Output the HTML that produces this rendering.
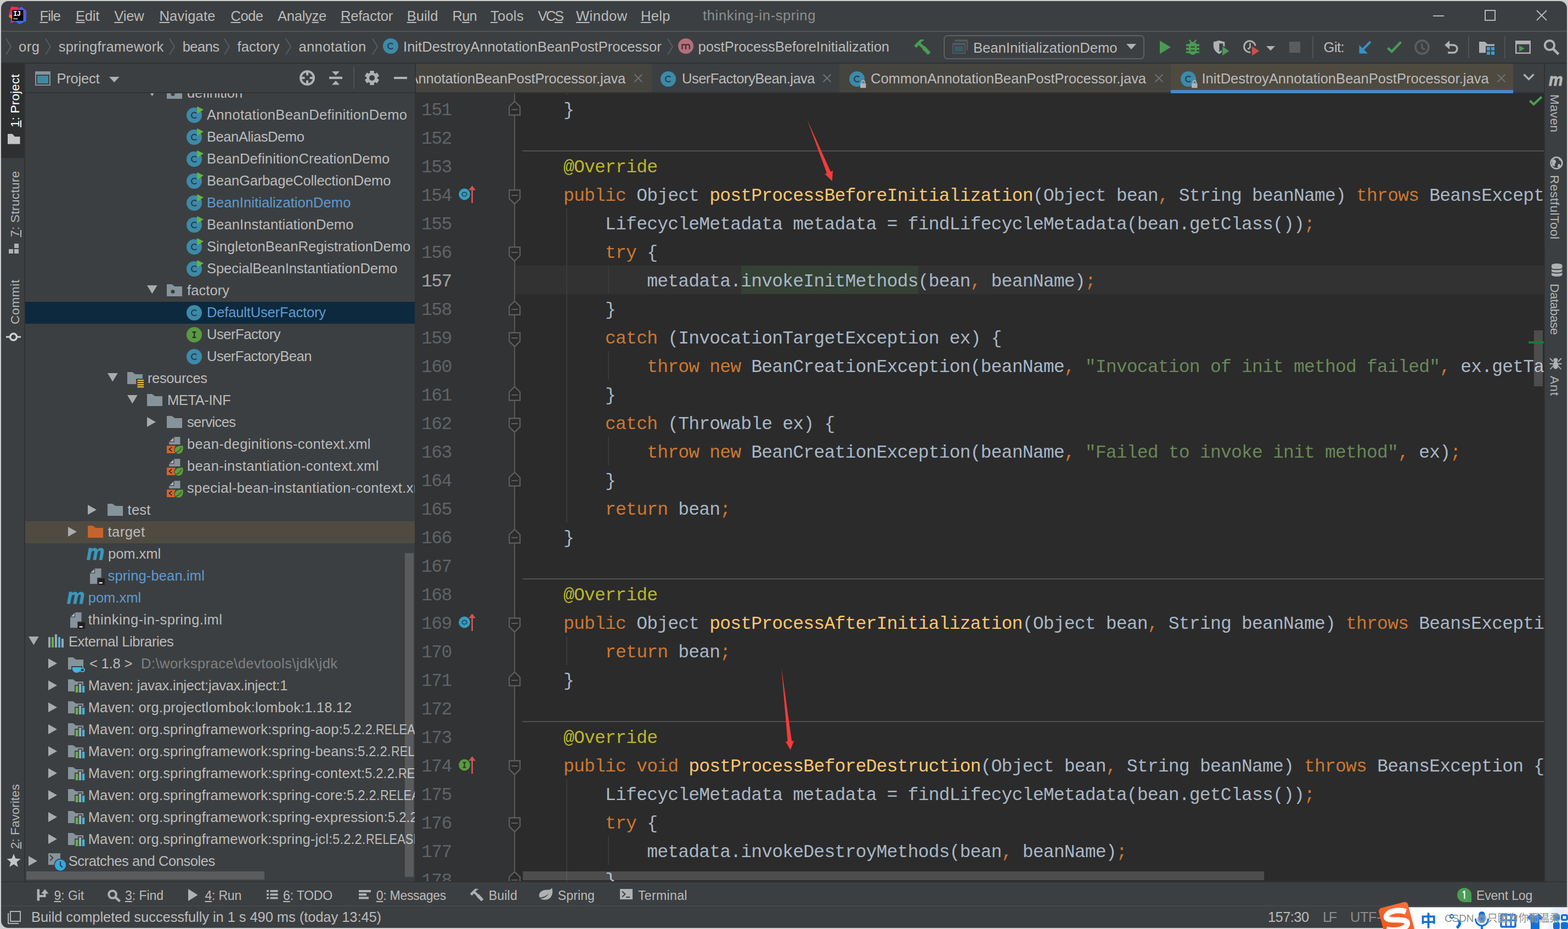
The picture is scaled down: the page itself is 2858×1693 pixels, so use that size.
<!DOCTYPE html><html><head><meta charset="utf-8"><title>thinking-in-spring</title>
<style>
html,body{margin:0;padding:0}
html{overflow:hidden}
body{width:2858px;height:1693px;overflow:hidden;background:#cdcdcd;position:relative;font-family:"Liberation Sans","Noto Sans CJK SC",sans-serif;font-size:25.5px;color:#bbbbbb}
#root{position:absolute;left:0;top:0;width:2858px;height:1693px;overflow:hidden}
#win{position:absolute;left:2px;top:2px;width:2854px;height:1689px;border-radius:13px;background:#3c3f41;overflow:hidden}
#pg{position:absolute;left:-2px;top:-2px;width:2858px;height:1693px}
u{text-decoration:underline;text-decoration-thickness:2px;text-underline-offset:2px}
.code{position:absolute;font-family:"Liberation Mono",monospace;font-size:33px;letter-spacing:-0.79px;white-space:pre;color:#a9b7c6;height:52px;line-height:60px;overflow:hidden}
.k{color:#cc7832}.a{color:#bbb529}.m{color:#ffc66d}.s{color:#6a8759}
.ln{color:#606366;font-size:33px;letter-spacing:-1.6px}
</style></head><body>
<div id="root"><div id="win"><div id="pg">
<div style="position:absolute;left:0px;top:56px;width:2858px;height:2px;background:#515354;"></div>
<svg style="position:absolute;left:16px;top:12px;" width="33" height="33" viewBox="0 0 33 33"><path d="M4.5 0L17 1L19 6L7 9L0.5 12.5Z" fill="#fe2857"/><path d="M22.5 0L32 7.5L31.5 26.5L19.5 32L12 27L14 9Z" fill="#3a6cf0"/><path d="M24 3L32 8L31 20L22 14Z" fill="#7a45d8" opacity="0.55"/><path d="M0.5 12.5L7 9L9 27L3 30.5L5 20L0 18Z" fill="#c530a8"/><path d="M0 18L3.5 14L8 16L7 24Z" fill="#fc801d"/><path d="M3 30.5L9 26L16 28L12 27Z" fill="#a735c5"/><rect x="6.3" y="6.2" width="20" height="19.6" fill="#000"/><rect x="8.4" y="21.6" width="8" height="1.4" fill="#fff"/><text x="8" y="17.3" font-family="Liberation Mono,monospace" font-weight="bold" font-size="12.5" fill="#fff" letter-spacing="-1">IJ</text></svg>
<div style="position:absolute;left:72.5px;top:14.16px;line-height:30px;font-size:25.5px;color:#bbbbbb;white-space:pre;letter-spacing:-0.897px;"><u>F</u>ile</div>
<div style="position:absolute;left:138px;top:14.16px;line-height:30px;font-size:25.5px;color:#bbbbbb;white-space:pre;letter-spacing:-0.235px;"><u>E</u>dit</div>
<div style="position:absolute;left:208.3px;top:14.16px;line-height:30px;font-size:25.5px;color:#bbbbbb;white-space:pre;letter-spacing:-0.152px;"><u>V</u>iew</div>
<div style="position:absolute;left:290.5px;top:14.16px;line-height:30px;font-size:25.5px;color:#bbbbbb;white-space:pre;letter-spacing:0.183px;"><u>N</u>avigate</div>
<div style="position:absolute;left:420.6px;top:14.16px;line-height:30px;font-size:25.5px;color:#bbbbbb;white-space:pre;letter-spacing:-0.564px;"><u>C</u>ode</div>
<div style="position:absolute;left:506px;top:14.16px;line-height:30px;font-size:25.5px;color:#bbbbbb;white-space:pre;letter-spacing:-0.245px;">Analy<u>z</u>e</div>
<div style="position:absolute;left:620.9px;top:14.16px;line-height:30px;font-size:25.5px;color:#bbbbbb;white-space:pre;letter-spacing:-0.158px;"><u>R</u>efactor</div>
<div style="position:absolute;left:741.8px;top:14.16px;line-height:30px;font-size:25.5px;color:#bbbbbb;white-space:pre;letter-spacing:-0.040px;"><u>B</u>uild</div>
<div style="position:absolute;left:824.6px;top:14.16px;line-height:30px;font-size:25.5px;color:#bbbbbb;white-space:pre;letter-spacing:-0.792px;">R<u>u</u>n</div>
<div style="position:absolute;left:894px;top:14.16px;line-height:30px;font-size:25.5px;color:#bbbbbb;white-space:pre;letter-spacing:0.235px;"><u>T</u>ools</div>
<div style="position:absolute;left:980.4px;top:14.16px;line-height:30px;font-size:25.5px;color:#bbbbbb;white-space:pre;letter-spacing:-2.445px;">VC<u>S</u></div>
<div style="position:absolute;left:1050px;top:14.16px;line-height:30px;font-size:25.5px;color:#bbbbbb;white-space:pre;letter-spacing:0.485px;"><u>W</u>indow</div>
<div style="position:absolute;left:1168px;top:14.16px;line-height:30px;font-size:25.5px;color:#bbbbbb;white-space:pre;letter-spacing:0.339px;"><u>H</u>elp</div>
<div style="position:absolute;left:1281px;top:13.16px;line-height:30px;font-size:25.5px;color:#8c8e90;white-space:pre;letter-spacing:0.658px;">thinking-in-spring</div>
<div style="position:absolute;left:2612px;top:28px;width:20px;height:2px;background:#b4b6b7;"></div>
<div style="position:absolute;left:2706px;top:18px;width:16px;height:16px;border:2px solid #b4b6b7"></div>
<svg style="position:absolute;left:2800px;top:18px;" width="20" height="20" viewBox="0 0 20 20"><path d="M1 1L19 19M19 1L1 19" stroke="#b4b6b7" stroke-width="2" fill="none"/></svg>
<div style="position:absolute;left:0px;top:114px;width:2858px;height:2px;background:#2f3133;"></div>
<svg style="position:absolute;left:10px;top:69px;" width="12" height="32" viewBox="0 0 12 32"><path d="M1 1.5L10 16L1 30.5" stroke="#5c6366" stroke-width="1.55" fill="none"/></svg>
<svg style="position:absolute;left:82px;top:69px;" width="12" height="32" viewBox="0 0 12 32"><path d="M1 1.5L10 16L1 30.5" stroke="#5c6366" stroke-width="1.55" fill="none"/></svg>
<svg style="position:absolute;left:308px;top:69px;" width="12" height="32" viewBox="0 0 12 32"><path d="M1 1.5L10 16L1 30.5" stroke="#5c6366" stroke-width="1.55" fill="none"/></svg>
<svg style="position:absolute;left:408px;top:69px;" width="12" height="32" viewBox="0 0 12 32"><path d="M1 1.5L10 16L1 30.5" stroke="#5c6366" stroke-width="1.55" fill="none"/></svg>
<svg style="position:absolute;left:520px;top:69px;" width="12" height="32" viewBox="0 0 12 32"><path d="M1 1.5L10 16L1 30.5" stroke="#5c6366" stroke-width="1.55" fill="none"/></svg>
<svg style="position:absolute;left:678px;top:69px;" width="12" height="32" viewBox="0 0 12 32"><path d="M1 1.5L10 16L1 30.5" stroke="#5c6366" stroke-width="1.55" fill="none"/></svg>
<svg style="position:absolute;left:1215.5px;top:69px;" width="12" height="32" viewBox="0 0 12 32"><path d="M1 1.5L10 16L1 30.5" stroke="#5c6366" stroke-width="1.55" fill="none"/></svg>
<div style="position:absolute;left:34px;top:70.16px;line-height:30px;font-size:25.5px;color:#bbbbbb;white-space:pre;letter-spacing:0.550px;">org</div>
<div style="position:absolute;left:106.7px;top:70.16px;line-height:30px;font-size:25.5px;color:#bbbbbb;white-space:pre;letter-spacing:0.216px;">springframework</div>
<div style="position:absolute;left:332.7px;top:70.16px;line-height:30px;font-size:25.5px;color:#bbbbbb;white-space:pre;letter-spacing:-0.534px;">beans</div>
<div style="position:absolute;left:432.5px;top:70.16px;line-height:30px;font-size:25.5px;color:#bbbbbb;white-space:pre;letter-spacing:0.083px;">factory</div>
<div style="position:absolute;left:544.4px;top:70.16px;line-height:30px;font-size:25.5px;color:#bbbbbb;white-space:pre;letter-spacing:0.420px;">annotation</div>
<svg style="position:absolute;left:697.7px;top:68px;" width="32" height="33" viewBox="0 -2 32 33"><circle cx="14" cy="14" r="14" fill="#3d8aa8"/><path d="M18.2 10.6A5.2 5.2 0 1 0 18.2 17.4" stroke="#214557" stroke-width="2.3" fill="none"/></svg>
<div style="position:absolute;left:735px;top:70.16px;line-height:30px;font-size:25.5px;color:#bbbbbb;white-space:pre;letter-spacing:0.043px;">InitDestroyAnnotationBeanPostProcessor</div>
<svg style="position:absolute;left:1235.5px;top:68px;" width="32" height="33" viewBox="0 -2 32 33"><circle cx="14" cy="14" r="14" fill="#b26f7c"/><path d="M7.4 19.7V10.3M7.4 13.4C8.6 10.2 13.8 10 14 13.6V19.7M14 13.6C15.2 10.2 20.6 10 20.8 13.6V19.7" stroke="#452930" stroke-width="2.15" fill="none"/></svg>
<div style="position:absolute;left:1272.5px;top:70.16px;line-height:30px;font-size:25.5px;color:#bbbbbb;white-space:pre;letter-spacing:-0.005px;">postProcessBeforeInitialization</div>
<svg style="position:absolute;left:1664px;top:70px;" width="34" height="34" viewBox="0 0 34 34"><g transform="scale(1.0)"><path d="M2 13.2L13.3 2H20.2V3.6L16.7 5.3L14 8.4L20.5 13.9L22.9 15.1L32.2 25.4L27.4 30L17.1 19.7V18.3L10.4 12.3L6.6 17.3Z" fill="#499c54"/></g></svg>
<div style="position:absolute;left:1720px;top:64px;width:362px;height:40px;border:2px solid #5e6162;border-radius:7px"></div>
<svg style="position:absolute;left:1735px;top:72px;" width="30" height="27" viewBox="0 0 30 27"><rect x="5" y="0.2" width="24" height="3.6" fill="#525a5f"/><rect x="26.8" y="0.2" width="2.2" height="19.6" fill="#525a5f"/><rect x="1" y="6.2" width="24" height="19.8" fill="#525a5f"/><rect x="3.1" y="10.2" width="19.8" height="13.7" fill="#3c3f41"/><rect x="5" y="12" width="16" height="10" fill="#3a5a66"/></svg>
<div style="position:absolute;left:1774px;top:72.16px;line-height:30px;font-size:25.5px;color:#bbbbbb;white-space:pre;letter-spacing:0.077px;">BeanInitializationDemo</div>
<svg style="position:absolute;left:2053px;top:80px;" width="18" height="10" viewBox="0 0 18 10"><path d="M0 0H18L9 10Z" fill="#afb1b3"/></svg>
<svg style="position:absolute;left:2114px;top:74px;" width="22" height="26" viewBox="0 0 22 26"><path d="M0 0L19.8 12.1L0 24.2Z" fill="#499c54"/></svg>
<svg style="position:absolute;left:2162px;top:72px;" width="25" height="30" viewBox="0 0 25 30"><path d="M5.7 0.8L9.6 5.6M18.3 0.8L14.4 5.6" stroke="#499c54" stroke-width="2.6" fill="none"/><path d="M12 4.4C7.6 4.4 5 7.6 5 11.4V20.6C5 25 8 27.9 12 27.9S19.2 25 19.2 20.6V11.4C19.2 7.6 16.4 4.4 12 4.4Z" fill="#499c54"/><rect x="0" y="8.3" width="24" height="3.9" fill="#499c54"/><rect x="0" y="15" width="24" height="3.8" fill="#499c54"/><rect x="0" y="21.6" width="24" height="3.2" fill="#499c54"/><rect x="8.3" y="12.5" width="7.5" height="2.2" fill="#3c3f41"/><rect x="8.3" y="19.1" width="7.5" height="2.2" fill="#3c3f41"/></svg>
<svg style="position:absolute;left:2211px;top:72px;" width="33" height="32" viewBox="0 0 33 32"><path d="M0.8 4.6L11 1.8L21.3 4.6V11C21.3 18 17.5 23 11 26.3C4.5 23 0.8 18 0.8 11Z" fill="#afb1b3"/><path d="M11.4 7.3L18.3 7.3V11C18.3 16 16 19.5 11.4 22.6Z" fill="#3c3f41"/><path d="M16.4 11.2L31 21L16.4 30.6Z" fill="#499c54" stroke="#3c3f41" stroke-width="1.6"/></svg>
<svg style="position:absolute;left:2265px;top:72px;" width="33" height="32" viewBox="0 0 33 32"><path d="M23.1 11.4A10.3 10.3 0 1 0 14.2 23.2" stroke="#afb1b3" stroke-width="3" fill="none"/><path d="M13.5 6.5V14.6L9.3 17.6" stroke="#afb1b3" stroke-width="2.6" fill="none"/><path d="M16.4 11.2L31.6 21L16.4 30.6Z" fill="#c9504c" stroke="#3c3f41" stroke-width="1.2"/></svg>
<svg style="position:absolute;left:2308px;top:84px;" width="16" height="9" viewBox="0 0 16 9"><path d="M0 0H16L8 8.2Z" fill="#afb1b3"/></svg>
<div style="position:absolute;left:2350px;top:76px;width:20px;height:20px;background:#5a5c5e;"></div>
<div style="position:absolute;left:2392px;top:66px;width:2px;height:40px;background:#515354;"></div>
<div style="position:absolute;left:2412.6px;top:71.16px;line-height:30px;font-size:25.5px;color:#bbbbbb;white-space:pre;letter-spacing:-0.542px;">Git:</div>
<svg style="position:absolute;left:2476px;top:74px;" width="25" height="25" viewBox="0 0 25 25"><path d="M22 2L5 19" stroke="#3592c4" stroke-width="4.2" fill="none"/><path d="M1.5 8V23.5H17Z" fill="#3592c4"/></svg>
<svg style="position:absolute;left:2527px;top:72px;" width="30" height="26" viewBox="0 0 30 26"><path d="M2.5 15.5L9.7 22L26.5 4.5" stroke="#499c54" stroke-width="4.4" fill="none"/></svg>
<svg style="position:absolute;left:2577px;top:71px;" width="30" height="30" viewBox="0 0 30 30"><circle cx="15" cy="15" r="12" stroke="#5a5d5f" stroke-width="3.8" fill="none"/><path d="M14.8 8V16L20 19.6" stroke="#5a5d5f" stroke-width="3.4" fill="none"/></svg>
<svg style="position:absolute;left:2630px;top:71px;" width="30" height="30" viewBox="0 0 30 30"><path d="M10 4L3 11L10 18" fill="none" stroke="#afb1b3" stroke-width="0"/><path d="M3 11L12 3V19Z" fill="#afb1b3"/><path d="M9 11H19a7 7 0 0 1 0 14H9" stroke="#afb1b3" stroke-width="3.4" fill="none"/></svg>
<div style="position:absolute;left:2676px;top:66px;width:2px;height:40px;background:#515354;"></div>
<svg style="position:absolute;left:2696px;top:76px;" width="30" height="26" viewBox="0 0 30 26"><path d="M0 0H10.5L15.5 4.6H28V20.2H0Z" fill="#afb1b3"/><rect x="12" y="7.8" width="18" height="18" fill="#3c3f41"/><rect x="14" y="9.8" width="6" height="6" fill="#3c9dd6"/><rect x="22" y="9.8" width="6" height="6" fill="#3c9dd6"/><rect x="14" y="17.8" width="6" height="6" fill="#3c9dd6"/><rect x="22" y="17.8" width="6" height="6" fill="#3c9dd6"/></svg>
<div style="position:absolute;left:2742px;top:66px;width:2px;height:40px;background:#515354;"></div>
<svg style="position:absolute;left:2762px;top:74px;" width="28" height="24" viewBox="0 0 28 24"><rect x="1.2" y="1.2" width="25.6" height="21.6" fill="none" stroke="#afb1b3" stroke-width="2.4"/><rect x="1" y="1" width="26" height="5.6" fill="#afb1b3"/><path d="M7 9L17 14.5L7 20Z" fill="#499c54"/></svg>
<svg style="position:absolute;left:2813px;top:71px;" width="32" height="32" viewBox="0 0 32 32"><circle cx="11.5" cy="11.5" r="8.6" stroke="#afb1b3" stroke-width="4" fill="none"/><path d="M18 18L27.8 27.8" stroke="#afb1b3" stroke-width="4.6"/></svg>
<div style="position:absolute;left:2px;top:116px;width:42px;height:172px;background:#2d2f30;"></div>
<div style="position:absolute;left:44px;top:116px;width:2px;height:1491px;background:#323232;"></div>
<div style="position:absolute;left:27px;top:232px;line-height:30px;font-size:22.7px;color:#ffffff;white-space:pre;letter-spacing:0.112px;transform-origin:0 0;transform:rotate(-90deg) translate(0,-15px)"><u>1</u>: Project</div>
<svg style="position:absolute;left:14px;top:244px;" width="24" height="19" viewBox="0 0 24 19"><path d="M0 0H8.5L13 5H22.5V18.5H0Z" fill="#c4c5c6"/></svg>
<div style="position:absolute;left:27px;top:432px;line-height:30px;font-size:22.7px;color:#b4b6b7;white-space:pre;letter-spacing:0.281px;transform-origin:0 0;transform:rotate(-90deg) translate(0,-15px)"><u>7</u>: Structure</div>
<svg style="position:absolute;left:16px;top:444px;" width="19" height="19" viewBox="0 0 19 19"><rect x="10" y="0" width="8" height="8" fill="#afb1b3"/><rect x="0" y="10" width="8" height="8" fill="#afb1b3"/><rect x="10" y="10" width="8" height="8" fill="#afb1b3"/></svg>
<div style="position:absolute;left:27px;top:591px;line-height:30px;font-size:22.7px;color:#b4b6b7;white-space:pre;letter-spacing:0.636px;transform-origin:0 0;transform:rotate(-90deg) translate(0,-15px)">Commit</div>
<svg style="position:absolute;left:11px;top:604px;" width="28" height="20" viewBox="0 0 28 20"><circle cx="13.5" cy="10" r="6" stroke="#d0d1d2" stroke-width="3.4" fill="none"/><path d="M0 10H7M20 10H27" stroke="#d0d1d2" stroke-width="3"/></svg>
<div style="position:absolute;left:27px;top:1547px;line-height:30px;font-size:22.7px;color:#b4b6b7;white-space:pre;letter-spacing:-0.048px;transform-origin:0 0;transform:rotate(-90deg) translate(0,-15px)"><u>2</u>: Favorites</div>
<svg style="position:absolute;left:12px;top:1556px;" width="26" height="25" viewBox="0 0 26 25"><path d="M13 0L16.4 8.6L25.6 9.2L18.5 15.1L20.8 24L13 19.1L5.2 24L7.5 15.1L0.4 9.2L9.6 8.6Z" fill="#c4c5c6"/></svg>
<div style="position:absolute;left:2814px;top:116px;width:2px;height:1491px;background:#323232;"></div>
<div style="position:absolute;left:2824px;top:139px;width:28px;height:19px;overflow:visible;font-family:'Liberation Sans',sans-serif;font-weight:bold;font-style:italic;font-size:32px;line-height:19px;color:#b4b6b7;-webkit-text-stroke:0.9px #b4b6b7;transform-origin:0 0;transform:scaleX(0.9)"><span style="position:relative;top:-3.5px;left:-1px">m</span></div>
<div style="position:absolute;left:2834px;top:172px;line-height:30px;font-size:22.7px;color:#b4b6b7;white-space:pre;letter-spacing:0.174px;transform-origin:0 0;transform:rotate(90deg) translate(0,-15px)">Maven</div>
<svg style="position:absolute;left:2825px;top:285px;" width="24" height="24" viewBox="0 0 24 24"><circle cx="12" cy="12" r="10.4" stroke="#afb1b3" stroke-width="2.6" fill="none"/><path d="M4 7C8 4 10 6 11 9C12 12 8 13 9 16C10 19 6 18 4 16Z M14 2.5C17 4 16 7 19 8C21 9 20 12 22 12C22 8 19 3 14 2.5Z M15 14C18 13 20 15 19 18C18 20 15 21 14 19Z" fill="#afb1b3"/></svg>
<div style="position:absolute;left:2834px;top:319px;line-height:30px;font-size:22.7px;color:#b4b6b7;white-space:pre;letter-spacing:0.492px;transform-origin:0 0;transform:rotate(90deg) translate(0,-15px)">RestfulTool</div>
<svg style="position:absolute;left:2825.5px;top:478.5px;" width="24" height="26" viewBox="0 0 24 26"><path d="M2 4.5C2 0 21.5 0 21.5 4.5V21.5C21.5 26 2 26 2 21.5Z" fill="#afb1b3"/><path d="M2 9.4C2 13.2 21.5 13.2 21.5 9.4M2 15.8C2 19.6 21.5 19.6 21.5 15.8" stroke="#3c3f41" stroke-width="2" fill="none"/></svg>
<div style="position:absolute;left:2834px;top:517px;line-height:30px;font-size:22.7px;color:#b4b6b7;white-space:pre;letter-spacing:-0.521px;transform-origin:0 0;transform:rotate(90deg) translate(0,-15px)">Database</div>
<svg style="position:absolute;left:2824px;top:650px;" width="23" height="24" viewBox="0 0 23 24"><ellipse cx="11.5" cy="6" rx="4" ry="3.6" fill="#afb1b3"/><ellipse cx="11.5" cy="15.5" rx="5" ry="7" fill="#afb1b3"/><path d="M7 9L1 3M16 9L22 3M6.5 13H0.5M16.5 13H22.5M7 17L1.5 23M16 17L21.5 23" stroke="#afb1b3" stroke-width="1.8" fill="none"/></svg>
<div style="position:absolute;left:2834px;top:685px;line-height:30px;font-size:22.7px;color:#b4b6b7;white-space:pre;letter-spacing:0.976px;transform-origin:0 0;transform:rotate(90deg) translate(0,-15px)">Ant</div>
<div style="position:absolute;left:0px;top:1606px;width:2858px;height:2px;background:#323232;"></div>
<div style="position:absolute;left:0px;top:1650px;width:2858px;height:2px;background:#454749;"></div>
<svg style="position:absolute;left:67px;top:1620px;" width="23" height="23" viewBox="0 0 23 23"><rect x="0.6" y="0.5" width="4.5" height="21" fill="#afb1b3"/><path d="M5 13H14.5V8" stroke="#afb1b3" stroke-width="4" fill="none"/><path d="M8 8.4L14.8 0.4L21.7 8.4Z" fill="#afb1b3"/></svg>
<div style="position:absolute;left:98.6px;top:1617.03px;line-height:30px;font-size:23px;color:#bbbbbb;white-space:pre;letter-spacing:-0.093px;"><u>9</u>: Git</div>
<svg style="position:absolute;left:195px;top:1620px;" width="26" height="26" viewBox="0 0 26 26"><circle cx="10" cy="10" r="6.8" stroke="#afb1b3" stroke-width="4" fill="none"/><path d="M15 15L23.6 22.6" stroke="#afb1b3" stroke-width="4.4"/></svg>
<div style="position:absolute;left:228px;top:1617.03px;line-height:30px;font-size:23px;color:#bbbbbb;white-space:pre;letter-spacing:-0.044px;"><u>3</u>: Find</div>
<svg style="position:absolute;left:343px;top:1620px;" width="18" height="22" viewBox="0 0 18 22"><path d="M0 0L17.5 11L0 22Z" fill="#afb1b3"/></svg>
<div style="position:absolute;left:373.5px;top:1617.03px;line-height:30px;font-size:23px;color:#bbbbbb;white-space:pre;letter-spacing:-0.210px;"><u>4</u>: Run</div>
<svg style="position:absolute;left:486px;top:1622px;" width="21" height="17" viewBox="0 0 21 17"><rect x="0" y="0" width="4" height="3.6" fill="#afb1b3"/><rect x="6.5" y="0" width="14" height="3.6" fill="#afb1b3"/><rect x="0" y="6.4" width="4" height="3.6" fill="#afb1b3"/><rect x="6.5" y="6.4" width="14" height="3.6" fill="#afb1b3"/><rect x="0" y="12.8" width="4" height="3.6" fill="#afb1b3"/><rect x="6.5" y="12.8" width="14" height="3.6" fill="#afb1b3"/></svg>
<div style="position:absolute;left:516px;top:1617.03px;line-height:30px;font-size:23px;color:#bbbbbb;white-space:pre;letter-spacing:-0.168px;"><u>6</u>: TODO</div>
<svg style="position:absolute;left:654px;top:1622px;" width="23" height="18" viewBox="0 0 23 18"><rect x="0" y="0" width="22" height="4" fill="#afb1b3"/><rect x="0" y="6.2" width="14" height="4" fill="#afb1b3"/><rect x="0" y="12.4" width="18" height="4" fill="#afb1b3"/></svg>
<div style="position:absolute;left:685.8px;top:1617.03px;line-height:30px;font-size:23px;color:#bbbbbb;white-space:pre;letter-spacing:-0.290px;"><u>0</u>: Messages</div>
<svg style="position:absolute;left:854.5px;top:1617.5px;" width="34" height="34" viewBox="0 0 34 34"><g transform="scale(0.82)"><path d="M2 13.2L13.3 2H20.2V3.6L16.7 5.3L14 8.4L20.5 13.9L22.9 15.1L32.2 25.4L27.4 30L17.1 19.7V18.3L10.4 12.3L6.6 17.3Z" fill="#afb1b3"/></g></svg>
<div style="position:absolute;left:890.7px;top:1617.03px;line-height:30px;font-size:23px;color:#bbbbbb;white-space:pre;letter-spacing:0.231px;">Build</div>
<svg style="position:absolute;left:982px;top:1618px;" width="26" height="24" viewBox="0 0 26 24"><path d="M0.5 14C1 6 9 3 17 3.6C20 3.8 22.5 2.5 24 0C26 6 25.5 13 21 18C16 23 7 22.5 3 19.5C8 19.5 15 16.5 18.5 10C14 15 7 17.5 1.5 17.5Z" fill="#afb1b3"/></svg>
<div style="position:absolute;left:1016.8px;top:1617.03px;line-height:30px;font-size:23px;color:#bbbbbb;white-space:pre;letter-spacing:0.120px;">Spring</div>
<svg style="position:absolute;left:1130px;top:1620px;" width="23" height="19" viewBox="0 0 23 19"><rect x="0" y="0" width="23" height="19" fill="#afb1b3"/><path d="M4 4.5L9.5 9.5L4 14.5" stroke="#3c3f41" stroke-width="2" fill="none"/><path d="M11 15H18" stroke="#3c3f41" stroke-width="2"/></svg>
<div style="position:absolute;left:1163px;top:1617.03px;line-height:30px;font-size:23px;color:#bbbbbb;white-space:pre;letter-spacing:0.362px;">Terminal</div>
<div style="position:absolute;left:2656px;top:1618px;width:26px;height:26px;border-radius:13px 13px 0 13px;background:#499c54"></div>
<div style="position:absolute;left:2663.3px;top:1616.59px;line-height:30px;font-size:18.5px;color:#ffffff;white-space:pre;font-weight:bold;font-family:NanumGothic,sans-serif;">1</div>
<div style="position:absolute;left:2691px;top:1617.03px;line-height:30px;font-size:23px;color:#bbbbbb;white-space:pre;letter-spacing:-0.175px;">Event Log</div>
<div style="position:absolute;left:18px;top:1660px;width:16px;height:16px;border:2px solid #b0b2b4"></div>
<svg style="position:absolute;left:13px;top:1664px;" width="24" height="22" viewBox="0 0 24 22"><path d="M2 0V19H21" stroke="#b0b2b4" stroke-width="2" fill="none"/></svg>
<div style="position:absolute;left:57px;top:1656.16px;line-height:30px;font-size:25.5px;color:#bbbbbb;white-space:pre;letter-spacing:-0.072px;">Build completed successfully in 1 s 490 ms (today 13:45)</div>
<div style="position:absolute;left:2311px;top:1656.16px;line-height:30px;font-size:25.5px;color:#bbbbbb;white-space:pre;letter-spacing:-0.581px;">157:30</div>
<div style="position:absolute;left:2411px;top:1656.16px;line-height:30px;font-size:25.5px;color:#8a8c8e;white-space:pre;letter-spacing:-3.378px;">LF</div>
<div style="position:absolute;left:2461px;top:1656.16px;line-height:30px;font-size:25.5px;color:#8a8c8e;white-space:pre;letter-spacing:-0.447px;">UTF-8</div>
<div style="position:absolute;left:46px;top:170px;width:710px;height:1436px;overflow:hidden;background:#3c3f41">
<div style="position:absolute;left:-46px;top:-170px;width:2858px;height:1693px">
<svg style="position:absolute;left:268px;top:160px;" width="19" height="16" viewBox="0 0 19 16"><path d="M0 0H18.6L9.3 15.5Z" fill="#a9abad"/></svg>
<svg style="position:absolute;left:304px;top:158px;" width="32" height="30" viewBox="0 0 32 30"><path d="M0 0H9L14.5 4H28V22H0Z" fill="#87939a"/><circle cx="11" cy="13.5" r="3.6" fill="#3c3f41"/></svg>
<div style="position:absolute;left:341px;top:154.16px;line-height:30px;font-size:25.5px;color:#bbbbbb;white-space:pre;letter-spacing:-0.107px;">definition</div>
<svg style="position:absolute;left:340px;top:194px;" width="32" height="33" viewBox="0 -2 32 33"><circle cx="14" cy="14" r="14" fill="#3d8aa8"/><path d="M18.2 10.6A5.2 5.2 0 1 0 18.2 17.4" stroke="#214557" stroke-width="2.3" fill="none"/><path d="M19 -2.2L31 3.8L19.4 11.6Z" fill="#62b543" stroke="#3c3f41" stroke-width="0"/></svg>
<div style="position:absolute;left:377px;top:194.16px;line-height:30px;font-size:25.5px;color:#bbbbbb;white-space:pre;letter-spacing:0.336px;">AnnotationBeanDefinitionDemo</div>
<svg style="position:absolute;left:340px;top:234px;" width="32" height="33" viewBox="0 -2 32 33"><circle cx="14" cy="14" r="14" fill="#3d8aa8"/><path d="M18.2 10.6A5.2 5.2 0 1 0 18.2 17.4" stroke="#214557" stroke-width="2.3" fill="none"/><path d="M19 -2.2L31 3.8L19.4 11.6Z" fill="#62b543" stroke="#3c3f41" stroke-width="0"/></svg>
<div style="position:absolute;left:377px;top:234.16px;line-height:30px;font-size:25.5px;color:#bbbbbb;white-space:pre;letter-spacing:-0.418px;">BeanAliasDemo</div>
<svg style="position:absolute;left:340px;top:274px;" width="32" height="33" viewBox="0 -2 32 33"><circle cx="14" cy="14" r="14" fill="#3d8aa8"/><path d="M18.2 10.6A5.2 5.2 0 1 0 18.2 17.4" stroke="#214557" stroke-width="2.3" fill="none"/><path d="M19 -2.2L31 3.8L19.4 11.6Z" fill="#62b543" stroke="#3c3f41" stroke-width="0"/></svg>
<div style="position:absolute;left:377px;top:274.16px;line-height:30px;font-size:25.5px;color:#bbbbbb;white-space:pre;letter-spacing:0.117px;">BeanDefinitionCreationDemo</div>
<svg style="position:absolute;left:340px;top:314px;" width="32" height="33" viewBox="0 -2 32 33"><circle cx="14" cy="14" r="14" fill="#3d8aa8"/><path d="M18.2 10.6A5.2 5.2 0 1 0 18.2 17.4" stroke="#214557" stroke-width="2.3" fill="none"/><path d="M19 -2.2L31 3.8L19.4 11.6Z" fill="#62b543" stroke="#3c3f41" stroke-width="0"/></svg>
<div style="position:absolute;left:377px;top:314.16px;line-height:30px;font-size:25.5px;color:#bbbbbb;white-space:pre;letter-spacing:-0.143px;">BeanGarbageCollectionDemo</div>
<svg style="position:absolute;left:340px;top:354px;" width="32" height="33" viewBox="0 -2 32 33"><circle cx="14" cy="14" r="14" fill="#3d8aa8"/><path d="M18.2 10.6A5.2 5.2 0 1 0 18.2 17.4" stroke="#214557" stroke-width="2.3" fill="none"/><path d="M19 -2.2L31 3.8L19.4 11.6Z" fill="#62b543" stroke="#3c3f41" stroke-width="0"/></svg>
<div style="position:absolute;left:377px;top:354.16px;line-height:30px;font-size:25.5px;color:#5e9bd1;white-space:pre;letter-spacing:0.073px;">BeanInitializationDemo</div>
<svg style="position:absolute;left:340px;top:394px;" width="32" height="33" viewBox="0 -2 32 33"><circle cx="14" cy="14" r="14" fill="#3d8aa8"/><path d="M18.2 10.6A5.2 5.2 0 1 0 18.2 17.4" stroke="#214557" stroke-width="2.3" fill="none"/><path d="M19 -2.2L31 3.8L19.4 11.6Z" fill="#62b543" stroke="#3c3f41" stroke-width="0"/></svg>
<div style="position:absolute;left:377px;top:394.16px;line-height:30px;font-size:25.5px;color:#bbbbbb;white-space:pre;letter-spacing:0.116px;">BeanInstantiationDemo</div>
<svg style="position:absolute;left:340px;top:434px;" width="32" height="33" viewBox="0 -2 32 33"><circle cx="14" cy="14" r="14" fill="#3d8aa8"/><path d="M18.2 10.6A5.2 5.2 0 1 0 18.2 17.4" stroke="#214557" stroke-width="2.3" fill="none"/><path d="M19 -2.2L31 3.8L19.4 11.6Z" fill="#62b543" stroke="#3c3f41" stroke-width="0"/></svg>
<div style="position:absolute;left:377px;top:434.16px;line-height:30px;font-size:25.5px;color:#bbbbbb;white-space:pre;letter-spacing:0.043px;">SingletonBeanRegistrationDemo</div>
<svg style="position:absolute;left:340px;top:474px;" width="32" height="33" viewBox="0 -2 32 33"><circle cx="14" cy="14" r="14" fill="#3d8aa8"/><path d="M18.2 10.6A5.2 5.2 0 1 0 18.2 17.4" stroke="#214557" stroke-width="2.3" fill="none"/><path d="M19 -2.2L31 3.8L19.4 11.6Z" fill="#62b543" stroke="#3c3f41" stroke-width="0"/></svg>
<div style="position:absolute;left:377px;top:474.16px;line-height:30px;font-size:25.5px;color:#bbbbbb;white-space:pre;letter-spacing:-0.050px;">SpecialBeanInstantiationDemo</div>
<svg style="position:absolute;left:268px;top:520px;" width="19" height="16" viewBox="0 0 19 16"><path d="M0 0H18.6L9.3 15.5Z" fill="#a9abad"/></svg>
<svg style="position:absolute;left:304px;top:518px;" width="32" height="30" viewBox="0 0 32 30"><path d="M0 0H9L14.5 4H28V22H0Z" fill="#87939a"/><circle cx="11" cy="13.5" r="3.6" fill="#3c3f41"/></svg>
<div style="position:absolute;left:341px;top:514.16px;line-height:30px;font-size:25.5px;color:#bbbbbb;white-space:pre;letter-spacing:0.069px;">factory</div>
<div style="position:absolute;left:46px;top:550px;width:710px;height:40px;background:#0d293e;"></div>
<svg style="position:absolute;left:340px;top:554px;" width="32" height="33" viewBox="0 -2 32 33"><circle cx="14" cy="14" r="14" fill="#3d8aa8"/><path d="M18.2 10.6A5.2 5.2 0 1 0 18.2 17.4" stroke="#214557" stroke-width="2.3" fill="none"/></svg>
<div style="position:absolute;left:377px;top:554.16px;line-height:30px;font-size:25.5px;color:#5e9bd1;white-space:pre;letter-spacing:-0.152px;">DefaultUserFactory</div>
<svg style="position:absolute;left:340px;top:594px;" width="32" height="33" viewBox="0 -2 32 33"><circle cx="14" cy="14" r="14" fill="#5a9a42"/><path d="M10.5 9.2H17.5M10.5 18.8H17.5M14 9.2V18.8" stroke="#253320" stroke-width="2.2" fill="none"/></svg>
<div style="position:absolute;left:377px;top:594.16px;line-height:30px;font-size:25.5px;color:#bbbbbb;white-space:pre;letter-spacing:-0.441px;">UserFactory</div>
<svg style="position:absolute;left:340px;top:634px;" width="32" height="33" viewBox="0 -2 32 33"><circle cx="14" cy="14" r="14" fill="#3d8aa8"/><path d="M18.2 10.6A5.2 5.2 0 1 0 18.2 17.4" stroke="#214557" stroke-width="2.3" fill="none"/></svg>
<div style="position:absolute;left:377px;top:634.16px;line-height:30px;font-size:25.5px;color:#bbbbbb;white-space:pre;letter-spacing:-0.507px;">UserFactoryBean</div>
<svg style="position:absolute;left:196px;top:680px;" width="19" height="16" viewBox="0 0 19 16"><path d="M0 0H18.6L9.3 15.5Z" fill="#a9abad"/></svg>
<svg style="position:absolute;left:232px;top:678px;" width="32" height="30" viewBox="0 0 32 30"><path d="M0 0H9L14.5 4H28V22H0Z" fill="#87939a"/><rect x="16" y="12" width="16" height="18" fill="#3c3f41"/><path d="M18.5 15.2H30M18.5 19.2H30M18.5 23.1H30M18.5 27H30" stroke="#eab63a" stroke-width="2.3"/></svg>
<div style="position:absolute;left:269px;top:674.16px;line-height:30px;font-size:25.5px;color:#bbbbbb;white-space:pre;letter-spacing:-0.373px;">resources</div>
<svg style="position:absolute;left:232px;top:720px;" width="19" height="16" viewBox="0 0 19 16"><path d="M0 0H18.6L9.3 15.5Z" fill="#a9abad"/></svg>
<svg style="position:absolute;left:268px;top:718px;" width="32" height="30" viewBox="0 0 32 30"><path d="M0 0H9L14.5 4H28V22H0Z" fill="#87939a"/></svg>
<div style="position:absolute;left:305px;top:714.16px;line-height:30px;font-size:25.5px;color:#bbbbbb;white-space:pre;letter-spacing:-0.401px;">META-INF</div>
<svg style="position:absolute;left:268px;top:760px;" width="17" height="19" viewBox="0 0 17 19"><path d="M0 0L16 9L0 18Z" fill="#a9abad"/></svg>
<svg style="position:absolute;left:304px;top:758px;" width="32" height="30" viewBox="0 0 32 30"><path d="M0 0H9L14.5 4H28V22H0Z" fill="#87939a"/></svg>
<div style="position:absolute;left:341px;top:754.16px;line-height:30px;font-size:25.5px;color:#bbbbbb;white-space:pre;letter-spacing:-0.652px;">services</div>
<svg style="position:absolute;left:304px;top:796px;" width="34" height="32" viewBox="0 0 34 32"><path d="M4.2 9.5L13.5 0.3H24.4V14H4.2Z" fill="#87939a"/><path d="M4.2 9.5H13.5V0.3Z" fill="#3c3f41"/><path d="M5.6 8.2L12.2 1.7V8.2Z" fill="#aeb9c0"/><rect x="0" y="16.3" width="16" height="13.7" fill="#d4632a"/><path d="M9.2 19L4.3 22.8L9.2 26.6" stroke="#2b1a10" stroke-width="1.5" fill="none"/><circle cx="22" cy="23.4" r="8.6" fill="#3c3f41"/><path d="M14.6 26C13.6 19 19 15.6 29.3 16.2C31 23 28.5 30.6 21 30.8C18.5 30.8 16.4 29.6 15.4 27.8Z" fill="#5b9e3d"/><path d="M15.2 29.4C20 27.8 24.5 24.5 26.6 19.6" stroke="#2c4a1e" stroke-width="1.2" fill="none"/></svg>
<div style="position:absolute;left:341px;top:794.16px;line-height:30px;font-size:25.5px;color:#bbbbbb;white-space:pre;letter-spacing:0.365px;">bean-deginitions-context.xml</div>
<svg style="position:absolute;left:304px;top:836px;" width="34" height="32" viewBox="0 0 34 32"><path d="M4.2 9.5L13.5 0.3H24.4V14H4.2Z" fill="#87939a"/><path d="M4.2 9.5H13.5V0.3Z" fill="#3c3f41"/><path d="M5.6 8.2L12.2 1.7V8.2Z" fill="#aeb9c0"/><rect x="0" y="16.3" width="16" height="13.7" fill="#d4632a"/><path d="M9.2 19L4.3 22.8L9.2 26.6" stroke="#2b1a10" stroke-width="1.5" fill="none"/><circle cx="22" cy="23.4" r="8.6" fill="#3c3f41"/><path d="M14.6 26C13.6 19 19 15.6 29.3 16.2C31 23 28.5 30.6 21 30.8C18.5 30.8 16.4 29.6 15.4 27.8Z" fill="#5b9e3d"/><path d="M15.2 29.4C20 27.8 24.5 24.5 26.6 19.6" stroke="#2c4a1e" stroke-width="1.2" fill="none"/></svg>
<div style="position:absolute;left:341px;top:834.16px;line-height:30px;font-size:25.5px;color:#bbbbbb;white-space:pre;letter-spacing:0.365px;">bean-instantiation-context.xml</div>
<svg style="position:absolute;left:304px;top:876px;" width="34" height="32" viewBox="0 0 34 32"><path d="M4.2 9.5L13.5 0.3H24.4V14H4.2Z" fill="#87939a"/><path d="M4.2 9.5H13.5V0.3Z" fill="#3c3f41"/><path d="M5.6 8.2L12.2 1.7V8.2Z" fill="#aeb9c0"/><rect x="0" y="16.3" width="16" height="13.7" fill="#d4632a"/><path d="M9.2 19L4.3 22.8L9.2 26.6" stroke="#2b1a10" stroke-width="1.5" fill="none"/><circle cx="22" cy="23.4" r="8.6" fill="#3c3f41"/><path d="M14.6 26C13.6 19 19 15.6 29.3 16.2C31 23 28.5 30.6 21 30.8C18.5 30.8 16.4 29.6 15.4 27.8Z" fill="#5b9e3d"/><path d="M15.2 29.4C20 27.8 24.5 24.5 26.6 19.6" stroke="#2c4a1e" stroke-width="1.2" fill="none"/></svg>
<div style="position:absolute;left:341px;top:874.16px;line-height:30px;font-size:25.5px;color:#bbbbbb;white-space:pre;letter-spacing:0.365px;">special-bean-instantiation-context.xml</div>
<svg style="position:absolute;left:160px;top:920px;" width="17" height="19" viewBox="0 0 17 19"><path d="M0 0L16 9L0 18Z" fill="#a9abad"/></svg>
<svg style="position:absolute;left:196px;top:918px;" width="32" height="30" viewBox="0 0 32 30"><path d="M0 0H9L14.5 4H28V22H0Z" fill="#87939a"/></svg>
<div style="position:absolute;left:232.6px;top:914.16px;line-height:30px;font-size:25.5px;color:#bbbbbb;white-space:pre;letter-spacing:0.200px;">test</div>
<div style="position:absolute;left:46px;top:950px;width:710px;height:40px;background:#4f4b41;"></div>
<svg style="position:absolute;left:124px;top:960px;" width="17" height="19" viewBox="0 0 17 19"><path d="M0 0L16 9L0 18Z" fill="#a9abad"/></svg>
<svg style="position:absolute;left:160px;top:958px;" width="32" height="30" viewBox="0 0 32 30"><path d="M0 0H9L14.5 4H28V22H0Z" fill="#c4642c"/></svg>
<div style="position:absolute;left:196.5px;top:954.16px;line-height:30px;font-size:25.5px;color:#bbbbbb;white-space:pre;letter-spacing:0.467px;">target</div>
<div style="position:absolute;left:159px;top:1000.5px;width:34px;height:23px;overflow:visible;font-family:'Liberation Sans',sans-serif;font-weight:bold;font-style:italic;font-size:38px;line-height:23px;color:#3a98ba;-webkit-text-stroke:0.9px #3a98ba;transform-origin:0 0;transform:scaleX(0.96)"><span style="position:relative;top:-4.2px;left:-1px">m</span></div>
<div style="position:absolute;left:197px;top:994.16px;line-height:30px;font-size:25.5px;color:#bbbbbb;white-space:pre;letter-spacing:-0.035px;">pom.xml</div>
<svg style="position:absolute;left:163.5px;top:1036px;" width="30" height="32" viewBox="0 0 30 32"><path d="M0 9L9 0H20.5V28H0Z" fill="#87939a"/><path d="M0 9H9V0Z" fill="#3c3f41"/><path d="M1.3 7.8L7.8 1.3V7.8Z" fill="#aeb9c0"/><rect x="13" y="16.6" width="15.6" height="14.6" fill="#3c3f41"/><rect x="14.6" y="18.2" width="12.4" height="11.8" fill="#231f20"/><rect x="16.6" y="25.2" width="6" height="2.2" fill="#fff"/></svg>
<div style="position:absolute;left:196.5px;top:1034.16px;line-height:30px;font-size:25.5px;color:#5e9bd1;white-space:pre;letter-spacing:0.146px;">spring-bean.iml</div>
<div style="position:absolute;left:123px;top:1080.5px;width:34px;height:23px;overflow:visible;font-family:'Liberation Sans',sans-serif;font-weight:bold;font-style:italic;font-size:38px;line-height:23px;color:#3a98ba;-webkit-text-stroke:0.9px #3a98ba;transform-origin:0 0;transform:scaleX(0.96)"><span style="position:relative;top:-4.2px;left:-1px">m</span></div>
<div style="position:absolute;left:160.7px;top:1074.16px;line-height:30px;font-size:25.5px;color:#5e9bd1;white-space:pre;letter-spacing:0.008px;">pom.xml</div>
<svg style="position:absolute;left:127.5px;top:1116px;" width="30" height="32" viewBox="0 0 30 32"><path d="M0 9L9 0H20.5V28H0Z" fill="#87939a"/><path d="M0 9H9V0Z" fill="#3c3f41"/><path d="M1.3 7.8L7.8 1.3V7.8Z" fill="#aeb9c0"/><rect x="13" y="16.6" width="15.6" height="14.6" fill="#3c3f41"/><rect x="14.6" y="18.2" width="12.4" height="11.8" fill="#231f20"/><rect x="16.6" y="25.2" width="6" height="2.2" fill="#fff"/></svg>
<div style="position:absolute;left:160.7px;top:1114.16px;line-height:30px;font-size:25.5px;color:#bbbbbb;white-space:pre;letter-spacing:0.499px;">thinking-in-spring.iml</div>
<svg style="position:absolute;left:52px;top:1160px;" width="19" height="16" viewBox="0 0 19 16"><path d="M0 0H18.6L9.3 15.5Z" fill="#a9abad"/></svg>
<svg style="position:absolute;left:88px;top:1156px;" width="28" height="24" viewBox="0 0 28 24"><rect x="0" y="5" width="4" height="19" fill="#9aa7b0"/><rect x="6" y="5" width="4" height="19" fill="#62b543"/><rect x="12" y="0" width="4" height="24" fill="#9aa7b0"/><rect x="18" y="5" width="4" height="19" fill="#40b6e0"/><rect x="24" y="8" width="4" height="16" fill="#9aa7b0"/></svg>
<div style="position:absolute;left:125px;top:1154.16px;line-height:30px;font-size:25.5px;color:#bbbbbb;white-space:pre;letter-spacing:-0.389px;">External Libraries</div>
<svg style="position:absolute;left:88px;top:1200px;" width="17" height="19" viewBox="0 0 17 19"><path d="M0 0L16 9L0 18Z" fill="#a9abad"/></svg>
<svg style="position:absolute;left:124px;top:1198px;" width="32" height="30" viewBox="0 0 32 30"><path d="M0 0H9L14.5 4H28V22H0Z" fill="#87939a"/><rect x="6" y="16" width="20" height="8" fill="#3c3f41"/><path d="M7.7 17.9H24V19.5C24 25 20 28 15.85 28S7.7 25 7.7 19.5Z" fill="#40b6e0"/><rect x="22" y="20.2" width="8" height="5.6" rx="2.8" fill="#3c3f41" stroke="#40b6e0" stroke-width="1.8"/><path d="M9 17.9H24V19.5C24 21 23.7 22 23.4 23H21Z" fill="#40b6e0"/></svg>
<div style="position:absolute;left:162.9px;top:1194.16px;line-height:30px;font-size:25.5px;color:#bbbbbb;white-space:pre;letter-spacing:-0.157px;">&lt; 1.8 &gt;</div>
<div style="position:absolute;left:257px;top:1194.16px;line-height:30px;font-size:25.5px;color:#7f8183;white-space:pre;letter-spacing:0.471px;">D:\worksprace\devtools\jdk\jdk</div>
<svg style="position:absolute;left:88px;top:1240px;" width="17" height="19" viewBox="0 0 17 19"><path d="M0 0L16 9L0 18Z" fill="#a9abad"/></svg>
<svg style="position:absolute;left:124px;top:1238px;" width="32" height="30" viewBox="0 0 32 30"><path d="M0 0H9L14.5 4H28V22H0Z" fill="#87939a"/><path d="M12 25V10H18.2V6.3H25.8V10H32V25Z" fill="#3c3f41"/><rect x="13.7" y="11.8" width="4.6" height="12.2" fill="#62b543"/><rect x="19.9" y="8" width="4.2" height="16" fill="#9aa7b0"/><rect x="25.8" y="11.8" width="4.4" height="12.2" fill="#40b6e0"/></svg>
<div style="position:absolute;left:160.7px;top:1234.16px;line-height:30px;font-size:25.5px;color:#bbbbbb;white-space:pre;letter-spacing:-0.233px;">Maven: javax.inject:javax.inject:1</div>
<svg style="position:absolute;left:88px;top:1280px;" width="17" height="19" viewBox="0 0 17 19"><path d="M0 0L16 9L0 18Z" fill="#a9abad"/></svg>
<svg style="position:absolute;left:124px;top:1278px;" width="32" height="30" viewBox="0 0 32 30"><path d="M0 0H9L14.5 4H28V22H0Z" fill="#87939a"/><path d="M12 25V10H18.2V6.3H25.8V10H32V25Z" fill="#3c3f41"/><rect x="13.7" y="11.8" width="4.6" height="12.2" fill="#62b543"/><rect x="19.9" y="8" width="4.2" height="16" fill="#9aa7b0"/><rect x="25.8" y="11.8" width="4.4" height="12.2" fill="#40b6e0"/></svg>
<div style="position:absolute;left:160.7px;top:1274.16px;line-height:30px;font-size:25.5px;color:#bbbbbb;white-space:pre;letter-spacing:0.151px;">Maven: org.projectlombok:lombok:1.18.12</div>
<svg style="position:absolute;left:88px;top:1320px;" width="17" height="19" viewBox="0 0 17 19"><path d="M0 0L16 9L0 18Z" fill="#a9abad"/></svg>
<svg style="position:absolute;left:124px;top:1318px;" width="32" height="30" viewBox="0 0 32 30"><path d="M0 0H9L14.5 4H28V22H0Z" fill="#87939a"/><path d="M12 25V10H18.2V6.3H25.8V10H32V25Z" fill="#3c3f41"/><rect x="13.7" y="11.8" width="4.6" height="12.2" fill="#62b543"/><rect x="19.9" y="8" width="4.2" height="16" fill="#9aa7b0"/><rect x="25.8" y="11.8" width="4.4" height="12.2" fill="#40b6e0"/></svg>
<div style="position:absolute;left:160.7px;top:1314.16px;line-height:30px;font-size:25.5px;color:#bbbbbb;white-space:pre;letter-spacing:0.167px;">Maven: org.springframework:spring-aop:<span style="display:inline-block;transform:scaleX(.935);transform-origin:0 50%;margin-right:-4.3px">5.2.2.</span><span style="display:inline-block;transform:scaleX(.85);transform-origin:0 50%">RELEASE</span></div>
<svg style="position:absolute;left:88px;top:1360px;" width="17" height="19" viewBox="0 0 17 19"><path d="M0 0L16 9L0 18Z" fill="#a9abad"/></svg>
<svg style="position:absolute;left:124px;top:1358px;" width="32" height="30" viewBox="0 0 32 30"><path d="M0 0H9L14.5 4H28V22H0Z" fill="#87939a"/><path d="M12 25V10H18.2V6.3H25.8V10H32V25Z" fill="#3c3f41"/><rect x="13.7" y="11.8" width="4.6" height="12.2" fill="#62b543"/><rect x="19.9" y="8" width="4.2" height="16" fill="#9aa7b0"/><rect x="25.8" y="11.8" width="4.4" height="12.2" fill="#40b6e0"/></svg>
<div style="position:absolute;left:160.7px;top:1354.16px;line-height:30px;font-size:25.5px;color:#bbbbbb;white-space:pre;letter-spacing:0.167px;">Maven: org.springframework:spring-beans:<span style="display:inline-block;transform:scaleX(.935);transform-origin:0 50%;margin-right:-4.3px">5.2.2.</span><span style="display:inline-block;transform:scaleX(.85);transform-origin:0 50%">RELEASE</span></div>
<svg style="position:absolute;left:88px;top:1400px;" width="17" height="19" viewBox="0 0 17 19"><path d="M0 0L16 9L0 18Z" fill="#a9abad"/></svg>
<svg style="position:absolute;left:124px;top:1398px;" width="32" height="30" viewBox="0 0 32 30"><path d="M0 0H9L14.5 4H28V22H0Z" fill="#87939a"/><path d="M12 25V10H18.2V6.3H25.8V10H32V25Z" fill="#3c3f41"/><rect x="13.7" y="11.8" width="4.6" height="12.2" fill="#62b543"/><rect x="19.9" y="8" width="4.2" height="16" fill="#9aa7b0"/><rect x="25.8" y="11.8" width="4.4" height="12.2" fill="#40b6e0"/></svg>
<div style="position:absolute;left:160.7px;top:1394.16px;line-height:30px;font-size:25.5px;color:#bbbbbb;white-space:pre;letter-spacing:0.167px;">Maven: org.springframework:spring-context:<span style="display:inline-block;transform:scaleX(.935);transform-origin:0 50%;margin-right:-4.3px">5.2.2.</span><span style="display:inline-block;transform:scaleX(.85);transform-origin:0 50%">RELEASE</span></div>
<svg style="position:absolute;left:88px;top:1440px;" width="17" height="19" viewBox="0 0 17 19"><path d="M0 0L16 9L0 18Z" fill="#a9abad"/></svg>
<svg style="position:absolute;left:124px;top:1438px;" width="32" height="30" viewBox="0 0 32 30"><path d="M0 0H9L14.5 4H28V22H0Z" fill="#87939a"/><path d="M12 25V10H18.2V6.3H25.8V10H32V25Z" fill="#3c3f41"/><rect x="13.7" y="11.8" width="4.6" height="12.2" fill="#62b543"/><rect x="19.9" y="8" width="4.2" height="16" fill="#9aa7b0"/><rect x="25.8" y="11.8" width="4.4" height="12.2" fill="#40b6e0"/></svg>
<div style="position:absolute;left:160.7px;top:1434.16px;line-height:30px;font-size:25.5px;color:#bbbbbb;white-space:pre;letter-spacing:0.167px;">Maven: org.springframework:spring-core:<span style="display:inline-block;transform:scaleX(.935);transform-origin:0 50%;margin-right:-4.3px">5.2.2.</span><span style="display:inline-block;transform:scaleX(.85);transform-origin:0 50%">RELEASE</span></div>
<svg style="position:absolute;left:88px;top:1480px;" width="17" height="19" viewBox="0 0 17 19"><path d="M0 0L16 9L0 18Z" fill="#a9abad"/></svg>
<svg style="position:absolute;left:124px;top:1478px;" width="32" height="30" viewBox="0 0 32 30"><path d="M0 0H9L14.5 4H28V22H0Z" fill="#87939a"/><path d="M12 25V10H18.2V6.3H25.8V10H32V25Z" fill="#3c3f41"/><rect x="13.7" y="11.8" width="4.6" height="12.2" fill="#62b543"/><rect x="19.9" y="8" width="4.2" height="16" fill="#9aa7b0"/><rect x="25.8" y="11.8" width="4.4" height="12.2" fill="#40b6e0"/></svg>
<div style="position:absolute;left:160.7px;top:1474.16px;line-height:30px;font-size:25.5px;color:#bbbbbb;white-space:pre;letter-spacing:0.167px;">Maven: org.springframework:spring-expression:<span style="display:inline-block;transform:scaleX(.935);transform-origin:0 50%;margin-right:-4.3px">5.2.2.</span><span style="display:inline-block;transform:scaleX(.85);transform-origin:0 50%">RELEASE</span></div>
<svg style="position:absolute;left:88px;top:1520px;" width="17" height="19" viewBox="0 0 17 19"><path d="M0 0L16 9L0 18Z" fill="#a9abad"/></svg>
<svg style="position:absolute;left:124px;top:1518px;" width="32" height="30" viewBox="0 0 32 30"><path d="M0 0H9L14.5 4H28V22H0Z" fill="#87939a"/><path d="M12 25V10H18.2V6.3H25.8V10H32V25Z" fill="#3c3f41"/><rect x="13.7" y="11.8" width="4.6" height="12.2" fill="#62b543"/><rect x="19.9" y="8" width="4.2" height="16" fill="#9aa7b0"/><rect x="25.8" y="11.8" width="4.4" height="12.2" fill="#40b6e0"/></svg>
<div style="position:absolute;left:160.7px;top:1514.16px;line-height:30px;font-size:25.5px;color:#bbbbbb;white-space:pre;letter-spacing:0.167px;">Maven: org.springframework:spring-jcl:<span style="display:inline-block;transform:scaleX(.935);transform-origin:0 50%;margin-right:-4.3px">5.2.2.</span><span style="display:inline-block;transform:scaleX(.85);transform-origin:0 50%">RELEASE</span></div>
<svg style="position:absolute;left:52px;top:1560px;" width="17" height="19" viewBox="0 0 17 19"><path d="M0 0L16 9L0 18Z" fill="#a9abad"/></svg>
<svg style="position:absolute;left:88px;top:1555px;" width="36" height="34" viewBox="0 0 36 34"><path d="M0 0H22V13H13V21H0Z" fill="#87939a"/><path d="M3 3.5L8.5 8.5L3 13.5" stroke="#3c3f41" stroke-width="1.8" fill="none"/><circle cx="22" cy="21.5" r="11.8" fill="#3c3f41"/><circle cx="22" cy="21.5" r="10.2" fill="#35a7df"/><path d="M22 15V22L26 25.5" stroke="#1f3b4c" stroke-width="2" fill="none"/></svg>
<div style="position:absolute;left:124.7px;top:1554.16px;line-height:30px;font-size:25.5px;color:#bbbbbb;white-space:pre;letter-spacing:-0.418px;">Scratches and Consoles</div>
<div style="position:absolute;left:738px;top:1008px;width:16px;height:590px;background:rgba(255,255,255,0.15);"></div>
<div style="position:absolute;left:48px;top:1588px;width:434px;height:15px;background:rgba(255,255,255,0.15);"></div>
</div></div>
<div style="position:absolute;left:46px;top:116px;width:710px;height:52px;background:#3c3f41;"></div>
<div style="position:absolute;left:46px;top:168px;width:712px;height:2px;background:#323232;"></div>
<div style="position:absolute;left:756px;top:116px;width:2px;height:1491px;background:#323232;"></div>
<svg style="position:absolute;left:64px;top:130px;" width="28" height="26" viewBox="0 0 28 26"><rect x="0" y="0" width="28" height="26" fill="#87939a"/><rect x="2" y="6" width="24" height="18" fill="#3c3f41"/><rect x="4" y="8" width="20" height="14" fill="#3f89a5"/></svg>
<div style="position:absolute;left:103.4px;top:128.16px;line-height:30px;font-size:25.5px;color:#bbbbbb;white-space:pre;letter-spacing:-0.194px;">Project</div>
<svg style="position:absolute;left:198.5px;top:139.5px;" width="19" height="10" viewBox="0 0 19 10"><path d="M0 0H18.5L9.2 10Z" fill="#afb1b3"/></svg>
<svg style="position:absolute;left:545px;top:127px;" width="30" height="30" viewBox="0 0 30 30"><circle cx="15" cy="15" r="12" stroke="#afb1b3" stroke-width="4" fill="none"/><path d="M15 3V10.5M15 19.5V27M3 15H10.5M19.5 15H27" stroke="#afb1b3" stroke-width="4"/></svg>
<svg style="position:absolute;left:599px;top:129px;" width="26" height="27" viewBox="0 0 26 27"><path d="M1 12.8H25" stroke="#afb1b3" stroke-width="4.2"/><path d="M6 1H20L13 8.5Z M6 25.5H20L13 18Z" fill="#afb1b3"/></svg>
<div style="position:absolute;left:643.5px;top:122px;width:2px;height:40px;background:#4f5254;"></div>
<svg style="position:absolute;left:664px;top:128px;" width="28" height="28" viewBox="0 0 28 28"><g transform="translate(14,14)"><rect x="-3.7" y="-13" width="7.4" height="8" fill="#afb1b3" transform="rotate(0)"/><rect x="-3.7" y="-13" width="7.4" height="8" fill="#afb1b3" transform="rotate(60)"/><rect x="-3.7" y="-13" width="7.4" height="8" fill="#afb1b3" transform="rotate(120)"/><rect x="-3.7" y="-13" width="7.4" height="8" fill="#afb1b3" transform="rotate(180)"/><rect x="-3.7" y="-13" width="7.4" height="8" fill="#afb1b3" transform="rotate(240)"/><rect x="-3.7" y="-13" width="7.4" height="8" fill="#afb1b3" transform="rotate(300)"/><circle r="9.9" fill="#afb1b3"/><circle r="5.1" fill="#3c3f41"/></g></svg>
<div style="position:absolute;left:718px;top:139.7px;width:24px;height:4.4px;background:#afb1b3;"></div>
<div style="position:absolute;left:758px;top:116px;width:2056px;height:52px;background:#3c3f41;"></div>
<div style="position:absolute;left:758px;top:168px;width:2056px;height:2px;background:#323232;"></div>
<div style="position:absolute;left:758px;top:116px;width:430px;height:52px;background:#45443f;"></div>
<div style="position:absolute;left:1530px;top:116px;width:604px;height:52px;background:#45443f;"></div>
<div style="position:absolute;left:2134px;top:116px;width:624px;height:54px;background:#4e4a40;"></div>
<div style="position:absolute;left:2134px;top:164px;width:624px;height:6px;background:#4a88c7;"></div>
<div style="position:absolute;left:758px;top:116px;width:400px;height:52px;overflow:hidden"><div style="position:absolute;left:-758px;top:-116px">
<div style="position:absolute;left:745.6593195564516px;top:128.16px;line-height:30px;font-size:25.5px;color:#bbbbbb;white-space:pre;letter-spacing:-0.169px;">AnnotationBeanPostProcessor.java</div>
</div></div>
<svg style="position:absolute;left:1155px;top:134px;" width="17" height="17" viewBox="0 0 17 17"><path d="M1.5 1.5L15.5 15.5M15.5 1.5L1.5 15.5" stroke="#6f7274" stroke-width="1.9" fill="none"/></svg>
<svg style="position:absolute;left:1204px;top:128px;" width="32" height="33" viewBox="0 -2 32 33"><circle cx="14" cy="14" r="14" fill="#3d8aa8"/><path d="M18.2 10.6A5.2 5.2 0 1 0 18.2 17.4" stroke="#214557" stroke-width="2.3" fill="none"/></svg>
<div style="position:absolute;left:1243px;top:128.16px;line-height:30px;font-size:25.5px;color:#bbbbbb;white-space:pre;letter-spacing:-0.513px;">UserFactoryBean.java</div>
<svg style="position:absolute;left:1499px;top:134px;" width="17" height="17" viewBox="0 0 17 17"><path d="M1.5 1.5L15.5 15.5M15.5 1.5L1.5 15.5" stroke="#6f7274" stroke-width="1.9" fill="none"/></svg>
<svg style="position:absolute;left:1548px;top:128px;" width="32" height="33" viewBox="0 -2 32 33"><circle cx="14" cy="14" r="14" fill="#3d8aa8"/><path d="M18.2 10.6A5.2 5.2 0 1 0 18.2 17.4" stroke="#214557" stroke-width="2.3" fill="none"/><rect x="20" y="21.6" width="10.4" height="8.6" fill="#a9b3bb"/><path d="M22.6 21.6V19.2a2.6 2.6 0 0 1 5.2 0V21.6" stroke="#a9b3bb" stroke-width="1.8" fill="none"/></svg>
<div style="position:absolute;left:1587px;top:128.16px;line-height:30px;font-size:25.5px;color:#bbbbbb;white-space:pre;letter-spacing:-0.031px;">CommonAnnotationBeanPostProcessor.java</div>
<svg style="position:absolute;left:2104px;top:134px;" width="17" height="17" viewBox="0 0 17 17"><path d="M1.5 1.5L15.5 15.5M15.5 1.5L1.5 15.5" stroke="#6f7274" stroke-width="1.9" fill="none"/></svg>
<svg style="position:absolute;left:2152px;top:128px;" width="32" height="33" viewBox="0 -2 32 33"><circle cx="14" cy="14" r="14" fill="#3d8aa8"/><path d="M18.2 10.6A5.2 5.2 0 1 0 18.2 17.4" stroke="#214557" stroke-width="2.3" fill="none"/><rect x="20" y="21.6" width="10.4" height="8.6" fill="#a9b3bb"/><path d="M22.6 21.6V19.2a2.6 2.6 0 0 1 5.2 0V21.6" stroke="#a9b3bb" stroke-width="1.8" fill="none"/></svg>
<div style="position:absolute;left:2190.5px;top:128.16px;line-height:30px;font-size:25.5px;color:#bbbbbb;white-space:pre;letter-spacing:0.037px;">InitDestroyAnnotationBeanPostProcessor.java</div>
<svg style="position:absolute;left:2728px;top:134px;" width="17" height="17" viewBox="0 0 17 17"><path d="M1.5 1.5L15.5 15.5M15.5 1.5L1.5 15.5" stroke="#6f7274" stroke-width="1.9" fill="none"/></svg>
<svg style="position:absolute;left:2776px;top:134px;" width="22" height="14" viewBox="0 0 22 14"><path d="M1.5 1.5L10.5 10.5L19.5 1.5" stroke="#afb1b3" stroke-width="3.2" fill="none"/></svg>
<div style="position:absolute;left:758px;top:170px;width:2056px;height:1436px;overflow:hidden;background:#2b2b2b">
<div style="position:absolute;left:-758px;top:-170px;width:2858px;height:1693px">
<div style="position:absolute;left:758px;top:170px;width:180px;height:1436px;background:#313335;"></div>
<div style="position:absolute;left:938px;top:484px;width:1876px;height:52px;background:#323232;"></div>
<div style="position:absolute;left:1350.5px;top:484px;width:323px;height:52px;background:#344134;"></div>
<div style="position:absolute;left:1032px;top:380px;width:2px;height:572px;background:#393b3c;"></div>
<div style="position:absolute;left:1032px;top:1160px;width:2px;height:52px;background:#393b3c;"></div>
<div style="position:absolute;left:1032px;top:1420px;width:2px;height:208px;background:#393b3c;"></div>
<div style="position:absolute;left:1032px;top:170px;width:2px;height:3px;background:#393b3c;"></div>
<div style="position:absolute;left:1108px;top:484px;width:2px;height:52px;background:#393b3c;"></div>
<div style="position:absolute;left:1108px;top:640px;width:2px;height:52px;background:#393b3c;"></div>
<div style="position:absolute;left:1108px;top:796px;width:2px;height:52px;background:#393b3c;"></div>
<div style="position:absolute;left:1108px;top:1524px;width:2px;height:52px;background:#393b3c;"></div>
<div style="position:absolute;left:952px;top:274px;width:1862px;height:2px;background:#505050;"></div>
<div style="position:absolute;left:952px;top:1054px;width:1862px;height:2px;background:#505050;"></div>
<div style="position:absolute;left:952px;top:1314px;width:1862px;height:2px;background:#505050;"></div>
<div style="position:absolute;left:937px;top:170px;width:2px;height:1436px;background:#555759;"></div>
<div class="code ln" style="left:768px;top:172px;">151</div>
<div class="code" style="left:1027.05px;top:172px">}</div>
<div class="code ln" style="left:768px;top:224px;">152</div>
<div class="code ln" style="left:768px;top:276px;">153</div>
<div class="code" style="left:1027.05px;top:276px"><span class="a">@Override</span></div>
<div class="code ln" style="left:768px;top:328px;">154</div>
<div class="code" style="left:1027.05px;top:328px"><span class="k">public </span>Object <span class="m">postProcessBeforeInitialization</span>(Object bean<span class="k">, </span>String beanName) <span class="k">throws </span>BeansException {</div>
<div class="code ln" style="left:768px;top:380px;">155</div>
<div class="code" style="left:1103.10px;top:380px">LifecycleMetadata metadata = findLifecycleMetadata(bean.getClass())<span class="k">;</span></div>
<div class="code ln" style="left:768px;top:432px;">156</div>
<div class="code" style="left:1103.10px;top:432px"><span class="k">try </span>{</div>
<div class="code " style="left:768px;top:484px;color:#a4a3a3;font-size:33px;letter-spacing:-1.6px;">157</div>
<div class="code" style="left:1179.16px;top:484px">metadata.invokeInitMethods(bean<span class="k">, </span>beanName)<span class="k">;</span></div>
<div class="code ln" style="left:768px;top:536px;">158</div>
<div class="code" style="left:1103.10px;top:536px">}</div>
<div class="code ln" style="left:768px;top:588px;">159</div>
<div class="code" style="left:1103.10px;top:588px"><span class="k">catch </span>(InvocationTargetException ex) {</div>
<div class="code ln" style="left:768px;top:640px;">160</div>
<div class="code" style="left:1179.16px;top:640px"><span class="k">throw new </span>BeanCreationException(beanName<span class="k">, </span><span class="s">"Invocation of init method failed"</span><span class="k">, </span>ex.getTargetException())<span class="k">;</span></div>
<div class="code ln" style="left:768px;top:692px;">161</div>
<div class="code" style="left:1103.10px;top:692px">}</div>
<div class="code ln" style="left:768px;top:744px;">162</div>
<div class="code" style="left:1103.10px;top:744px"><span class="k">catch </span>(Throwable ex) {</div>
<div class="code ln" style="left:768px;top:796px;">163</div>
<div class="code" style="left:1179.16px;top:796px"><span class="k">throw new </span>BeanCreationException(beanName<span class="k">, </span><span class="s">"Failed to invoke init method"</span><span class="k">, </span>ex)<span class="k">;</span></div>
<div class="code ln" style="left:768px;top:848px;">164</div>
<div class="code" style="left:1103.10px;top:848px">}</div>
<div class="code ln" style="left:768px;top:900px;">165</div>
<div class="code" style="left:1103.10px;top:900px"><span class="k">return </span>bean<span class="k">;</span></div>
<div class="code ln" style="left:768px;top:952px;">166</div>
<div class="code" style="left:1027.05px;top:952px">}</div>
<div class="code ln" style="left:768px;top:1004px;">167</div>
<div class="code ln" style="left:768px;top:1056px;">168</div>
<div class="code" style="left:1027.05px;top:1056px"><span class="a">@Override</span></div>
<div class="code ln" style="left:768px;top:1108px;">169</div>
<div class="code" style="left:1027.05px;top:1108px"><span class="k">public </span>Object <span class="m">postProcessAfterInitialization</span>(Object bean<span class="k">, </span>String beanName) <span class="k">throws </span>BeansException {</div>
<div class="code ln" style="left:768px;top:1160px;">170</div>
<div class="code" style="left:1103.10px;top:1160px"><span class="k">return </span>bean<span class="k">;</span></div>
<div class="code ln" style="left:768px;top:1212px;">171</div>
<div class="code" style="left:1027.05px;top:1212px">}</div>
<div class="code ln" style="left:768px;top:1264px;">172</div>
<div class="code ln" style="left:768px;top:1316px;">173</div>
<div class="code" style="left:1027.05px;top:1316px"><span class="a">@Override</span></div>
<div class="code ln" style="left:768px;top:1368px;">174</div>
<div class="code" style="left:1027.05px;top:1368px"><span class="k">public void </span><span class="m">postProcessBeforeDestruction</span>(Object bean<span class="k">, </span>String beanName) <span class="k">throws </span>BeansException {</div>
<div class="code ln" style="left:768px;top:1420px;">175</div>
<div class="code" style="left:1103.10px;top:1420px">LifecycleMetadata metadata = findLifecycleMetadata(bean.getClass())<span class="k">;</span></div>
<div class="code ln" style="left:768px;top:1472px;">176</div>
<div class="code" style="left:1103.10px;top:1472px"><span class="k">try </span>{</div>
<div class="code ln" style="left:768px;top:1524px;">177</div>
<div class="code" style="left:1179.16px;top:1524px">metadata.invokeDestroyMethods(bean<span class="k">, </span>beanName)<span class="k">;</span></div>
<div class="code ln" style="left:768px;top:1576px;">178</div>
<div class="code" style="left:1103.10px;top:1576px">}</div>
<svg style="position:absolute;left:926px;top:344px;" width="24" height="30" viewBox="0 0 24 30"><path d="M2.2 2.3H21.8V18L12 27.6L2.2 18Z" fill="#2b2b2b" stroke="#5d5f61" stroke-width="2.2"/><path d="M6.2 12H17.8" stroke="#5d5f61" stroke-width="2"/></svg>
<svg style="position:absolute;left:926px;top:448px;" width="24" height="30" viewBox="0 0 24 30"><path d="M2.2 2.3H21.8V18L12 27.6L2.2 18Z" fill="#2b2b2b" stroke="#5d5f61" stroke-width="2.2"/><path d="M6.2 12H17.8" stroke="#5d5f61" stroke-width="2"/></svg>
<svg style="position:absolute;left:926px;top:604px;" width="24" height="30" viewBox="0 0 24 30"><path d="M2.2 2.3H21.8V18L12 27.6L2.2 18Z" fill="#2b2b2b" stroke="#5d5f61" stroke-width="2.2"/><path d="M6.2 12H17.8" stroke="#5d5f61" stroke-width="2"/></svg>
<svg style="position:absolute;left:926px;top:760px;" width="24" height="30" viewBox="0 0 24 30"><path d="M2.2 2.3H21.8V18L12 27.6L2.2 18Z" fill="#2b2b2b" stroke="#5d5f61" stroke-width="2.2"/><path d="M6.2 12H17.8" stroke="#5d5f61" stroke-width="2"/></svg>
<svg style="position:absolute;left:926px;top:1124px;" width="24" height="30" viewBox="0 0 24 30"><path d="M2.2 2.3H21.8V18L12 27.6L2.2 18Z" fill="#2b2b2b" stroke="#5d5f61" stroke-width="2.2"/><path d="M6.2 12H17.8" stroke="#5d5f61" stroke-width="2"/></svg>
<svg style="position:absolute;left:926px;top:1384px;" width="24" height="30" viewBox="0 0 24 30"><path d="M2.2 2.3H21.8V18L12 27.6L2.2 18Z" fill="#2b2b2b" stroke="#5d5f61" stroke-width="2.2"/><path d="M6.2 12H17.8" stroke="#5d5f61" stroke-width="2"/></svg>
<svg style="position:absolute;left:926px;top:1488px;" width="24" height="30" viewBox="0 0 24 30"><path d="M2.2 2.3H21.8V18L12 27.6L2.2 18Z" fill="#2b2b2b" stroke="#5d5f61" stroke-width="2.2"/><path d="M6.2 12H17.8" stroke="#5d5f61" stroke-width="2"/></svg>
<svg style="position:absolute;left:926px;top:182px;" width="24" height="30" viewBox="0 0 24 30"><path d="M2.2 27.6H21.8V12.2L12 2.7L2.2 12.2Z" fill="#2b2b2b" stroke="#5d5f61" stroke-width="2.2"/><path d="M6.2 17.8H17.8" stroke="#5d5f61" stroke-width="2"/></svg>
<svg style="position:absolute;left:926px;top:546px;" width="24" height="30" viewBox="0 0 24 30"><path d="M2.2 27.6H21.8V12.2L12 2.7L2.2 12.2Z" fill="#2b2b2b" stroke="#5d5f61" stroke-width="2.2"/><path d="M6.2 17.8H17.8" stroke="#5d5f61" stroke-width="2"/></svg>
<svg style="position:absolute;left:926px;top:702px;" width="24" height="30" viewBox="0 0 24 30"><path d="M2.2 27.6H21.8V12.2L12 2.7L2.2 12.2Z" fill="#2b2b2b" stroke="#5d5f61" stroke-width="2.2"/><path d="M6.2 17.8H17.8" stroke="#5d5f61" stroke-width="2"/></svg>
<svg style="position:absolute;left:926px;top:858px;" width="24" height="30" viewBox="0 0 24 30"><path d="M2.2 27.6H21.8V12.2L12 2.7L2.2 12.2Z" fill="#2b2b2b" stroke="#5d5f61" stroke-width="2.2"/><path d="M6.2 17.8H17.8" stroke="#5d5f61" stroke-width="2"/></svg>
<svg style="position:absolute;left:926px;top:962px;" width="24" height="30" viewBox="0 0 24 30"><path d="M2.2 27.6H21.8V12.2L12 2.7L2.2 12.2Z" fill="#2b2b2b" stroke="#5d5f61" stroke-width="2.2"/><path d="M6.2 17.8H17.8" stroke="#5d5f61" stroke-width="2"/></svg>
<svg style="position:absolute;left:926px;top:1222px;" width="24" height="30" viewBox="0 0 24 30"><path d="M2.2 27.6H21.8V12.2L12 2.7L2.2 12.2Z" fill="#2b2b2b" stroke="#5d5f61" stroke-width="2.2"/><path d="M6.2 17.8H17.8" stroke="#5d5f61" stroke-width="2"/></svg>
<svg style="position:absolute;left:926px;top:1586px;" width="24" height="30" viewBox="0 0 24 30"><path d="M2.2 27.6H21.8V12.2L12 2.7L2.2 12.2Z" fill="#2b2b2b" stroke="#5d5f61" stroke-width="2.2"/><path d="M6.2 17.8H17.8" stroke="#5d5f61" stroke-width="2"/></svg>
<svg style="position:absolute;left:836px;top:338px;" width="32" height="34" viewBox="0 0 32 34"><circle cx="10.5" cy="16" r="10.4" fill="#3a9cc0"/><ellipse cx="10.5" cy="16" rx="4.3" ry="3.6" stroke="#1f4f62" stroke-width="2" fill="none"/><path d="M24.6 32V7" stroke="#d05454" stroke-width="2.8"/><path d="M18.2 8.6L24.6 0.2L31 8.6Z" fill="#d05454"/></svg>
<svg style="position:absolute;left:836px;top:1118px;" width="32" height="34" viewBox="0 0 32 34"><circle cx="10.5" cy="16" r="10.4" fill="#3a9cc0"/><ellipse cx="10.5" cy="16" rx="4.3" ry="3.6" stroke="#1f4f62" stroke-width="2" fill="none"/><path d="M24.6 32V7" stroke="#d05454" stroke-width="2.8"/><path d="M18.2 8.6L24.6 0.2L31 8.6Z" fill="#d05454"/></svg>
<svg style="position:absolute;left:836px;top:1378px;" width="32" height="34" viewBox="0 0 32 34"><circle cx="10.5" cy="16" r="10.4" fill="#5a9a42"/><path d="M7.5 11.5H13.5M7.5 20.5H13.5M10.5 11.5V20.5" stroke="#223a18" stroke-width="2" fill="none"/><path d="M24.6 32V7" stroke="#d05454" stroke-width="2.8"/><path d="M18.2 8.6L24.6 0.2L31 8.6Z" fill="#d05454"/></svg>
<div style="position:absolute;left:2796px;top:602px;width:16px;height:102px;background:rgba(255,255,255,0.16);"></div>
<div style="position:absolute;left:2786px;top:622px;width:28px;height:4px;background:#1b7a2c;"></div>
<div style="position:absolute;left:953px;top:1588px;width:1351px;height:16px;background:rgba(255,255,255,0.16);"></div>
<svg style="position:absolute;left:2786px;top:174px;" width="28" height="20" viewBox="0 0 28 20"><path d="M2.5 9.5L9.5 16L24 2.5" stroke="#499c54" stroke-width="4.4" fill="none"/></svg>
</div></div>
<svg style="position:absolute;left:1460px;top:210px;" width="70" height="130" viewBox="0 0 70 130"><path d="M11.2 8L47 105.6L43.6 107.2L56.7 120L58.1 101L54 103Z" fill="#f93a3a"/></svg>
<svg style="position:absolute;left:1415px;top:1210px;" width="40" height="165" viewBox="0 0 40 165"><path d="M9.3 7L20.6 141L16.9 141.3L25.7 156.8L32.1 140.2L28.1 140.4Z" fill="#f93a3a"/></svg>
</div></div>
<div style="position:absolute;left:2560px;top:1653px;width:298px;height:40px;background:#ffffff;"></div>
<div style="position:absolute;left:2560px;top:1652.5px;width:298px;height:1.5px;background:#b4c8e4;"></div>
<div style="position:absolute;left:2819px;top:1654px;width:39px;height:39px;background:linear-gradient(100deg,#ffffff 0%,#e3f4fc 35%,#efeaf8 70%,#fbf4dd 100%);"></div>
<svg style="position:absolute;left:2500px;top:1635px;" width="100" height="58" viewBox="2500 1635 100 58"><defs><linearGradient id="sg" x1="0" y1="1" x2="1" y2="0"><stop offset="0" stop-color="#f2500f"/><stop offset="1" stop-color="#f8733e"/></linearGradient></defs><g transform="rotate(-14.8 2545 1675)"><rect x="2517.5" y="1648.5" width="55" height="56" rx="6" fill="url(#sg)"/></g><path d="M2562.5 1661.5C2548 1656.5 2526.5 1661 2527 1671.5C2527.5 1681 2566 1671 2565 1683C2564 1693 2543 1698 2527 1693" stroke="#ffffff" stroke-width="10" fill="none"/></svg>
<div style="position:absolute;left:2589px;top:1663.95px;line-height:30px;font-size:29px;color:#1270d8;white-space:pre;font-weight:bold;">中</div>
<svg style="position:absolute;left:2640px;top:1664px;" width="30" height="29" viewBox="0 0 30 29"><circle cx="6" cy="6" r="3.2" stroke="#1270d8" stroke-width="2.4" fill="none"/><path d="M17 14C22 14 23 20 15.5 27" stroke="#1270d8" stroke-width="5" fill="none"/></svg>
<svg style="position:absolute;left:2686px;top:1660px;" width="30" height="33" viewBox="0 0 30 33"><rect x="9" y="1" width="12" height="20" rx="6" fill="#1270d8"/><path d="M3.5 14C3.5 31 26.5 31 26.5 14" stroke="#1270d8" stroke-width="3.2" fill="none"/><path d="M15 27V33" stroke="#1270d8" stroke-width="4"/></svg>
<svg style="position:absolute;left:2734px;top:1665px;" width="30" height="28" viewBox="0 0 30 28"><rect x="2" y="2" width="26" height="22" rx="2" stroke="#1270d8" stroke-width="3.6" fill="none"/><path d="M2 12H28M11 2V24M20 2V24" stroke="#1270d8" stroke-width="3"/></svg>
<svg style="position:absolute;left:2782px;top:1664px;" width="32" height="29" viewBox="0 0 32 29"><path d="M9 1L1 8L6 13L8 11V29H24V11L26 13L31 8L23 1C20 5 12 5 9 1Z" fill="#1270d8"/></svg>
<svg style="position:absolute;left:2830px;top:1664px;" width="28" height="29" viewBox="0 0 28 29"><rect x="1" y="2" width="12" height="12" rx="3.5" fill="#1270d8"/><rect x="16.8" y="3.8" width="9.4" height="8.4" rx="2" fill="#ffffff" stroke="#1270d8" stroke-width="3.6"/><rect x="1" y="16.6" width="12" height="13" rx="3.5" fill="#1270d8"/><rect x="15" y="16.6" width="13" height="13" rx="3.5" fill="#1270d8"/></svg>
<div style="position:absolute;left:2633px;top:1659.42px;line-height:30px;font-size:19px;color:rgba(115,115,115,0.85);white-space:pre;letter-spacing:-0.1px;text-shadow:0 0 2px rgba(255,255,255,0.9);">CSDN @只因为你而温柔</div>
</div></body></html>
